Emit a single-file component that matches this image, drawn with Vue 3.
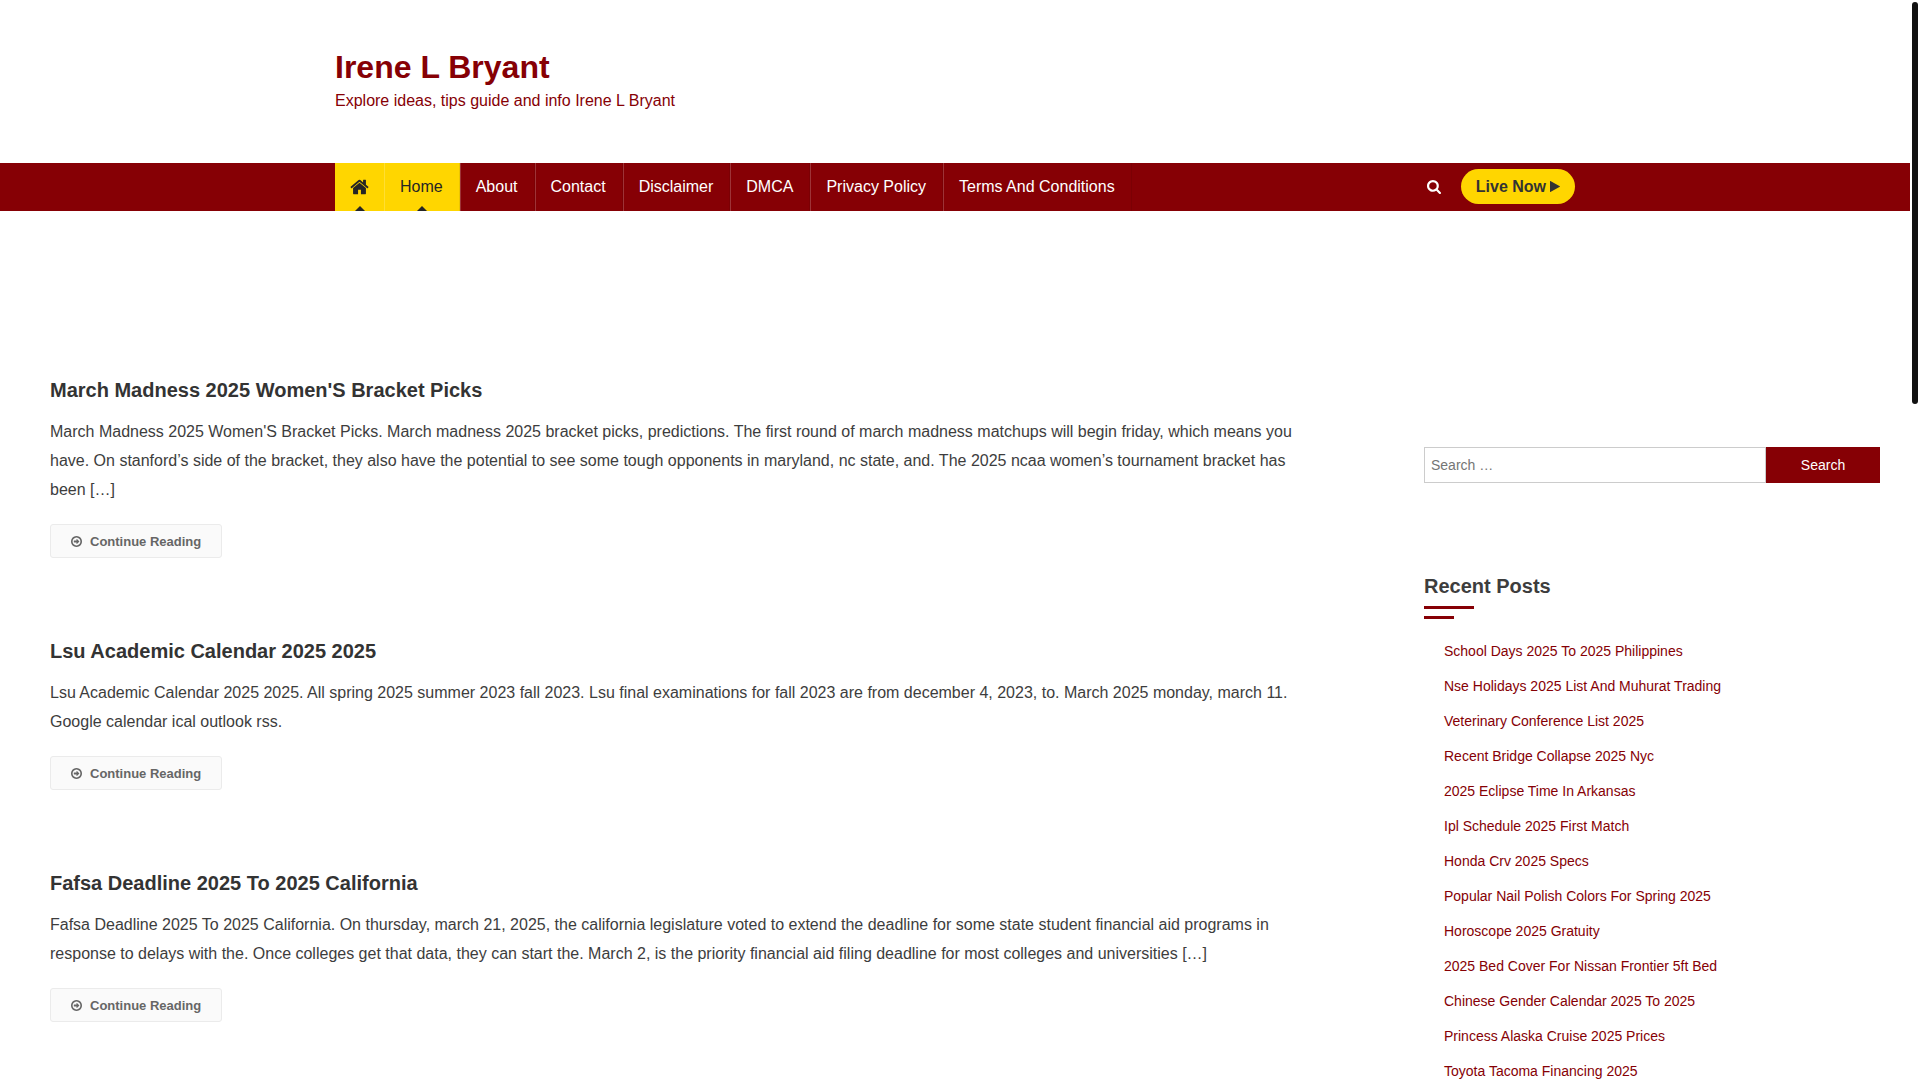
<template>
  <div class="page">
    <header class="site-header">
      <div class="container branding">
        <p class="site-title"><a href="#">Irene L Bryant</a></p>
        <p class="site-description">Explore ideas, tips guide and info Irene L Bryant</p>
      </div>
    </header>

    <nav class="main-nav" aria-label="Primary">
      <div class="container nav-inner">
        <ul class="menu">
          <li class="menu-item home-icon active">
            <a href="#" aria-label="Front page">
              <svg width="19" height="20" viewBox="64 0 1664 1792" aria-hidden="true">
                <path :d="icons.home" />
              </svg>
            </a>
          </li>
          <li
            v-for="item in menu"
            :key="item"
            class="menu-item"
            :class="{ active: item === 'Home' }"
          >
            <a href="#">{{ item }}</a>
          </li>
        </ul>
        <div class="nav-extra">
          <button class="search-toggle" type="button" aria-label="Open search">
            <svg width="14" height="14" viewBox="64 128 1664 1664" aria-hidden="true">
              <path :d="icons.search" />
            </svg>
          </button>
          <a class="live-link" href="#">
            Live Now
            <svg width="10" height="13" viewBox="192 0 1408 1792" aria-hidden="true">
              <path :d="icons.play" />
            </svg>
          </a>
        </div>
      </div>
    </nav>

    <div class="content">
      <main class="posts">
        <article v-for="post in posts" :key="post.title" class="post">
          <h2 class="post-title"><a href="#">{{ post.title }}</a></h2>
          <p class="post-excerpt">{{ post.excerpt }}</p>
          <a class="read-more" href="#">
            <svg width="11" height="11" viewBox="128 128 1536 1536" aria-hidden="true">
              <path :d="icons.arrow" />
            </svg>
            Continue Reading
          </a>
        </article>
      </main>

      <aside class="sidebar">
        <form class="search-form" role="search" @submit.prevent>
          <input v-model="query" type="search" placeholder="Search …" aria-label="Search for" />
          <button type="submit">Search</button>
        </form>
        <section class="widget">
          <h2 class="widget-title">Recent Posts</h2>
          <ul class="recent-list">
            <li v-for="title in recent" :key="title">
              <a href="#">{{ title }}</a>
            </li>
          </ul>
        </section>
      </aside>
    </div>

    <div class="scroll-rail" aria-hidden="true"></div>
  </div>
</template>

<script setup>
import { ref } from 'vue'

const query = ref('')

const menu = ['Home', 'About', 'Contact', 'Disclaimer', 'DMCA', 'Privacy Policy', 'Terms And Conditions']

const posts = [
  {
    title: "March Madness 2025 Women'S Bracket Picks",
    excerpt:
      "March Madness 2025 Women'S Bracket Picks. March madness 2025 bracket picks, predictions. The first round of march madness matchups will begin friday, which means you have. On stanford’s side of the bracket, they also have the potential to see some tough opponents in maryland, nc state, and. The 2025 ncaa women’s tournament bracket has been […]"
  },
  {
    title: 'Lsu Academic Calendar 2025 2025',
    excerpt:
      'Lsu Academic Calendar 2025 2025. All spring 2025 summer 2023 fall 2023. Lsu final examinations for fall 2023 are from december 4, 2023, to. March 2025 monday, march 11. Google calendar ical outlook rss.'
  },
  {
    title: 'Fafsa Deadline 2025 To 2025 California',
    excerpt:
      'Fafsa Deadline 2025 To 2025 California. On thursday, march 21, 2025, the california legislature voted to extend the deadline for some state student financial aid programs in response to delays with the. Once colleges get that data, they can start the. March 2, is the priority financial aid filing deadline for most colleges and universities […]'
  }
]

const recent = [
  'School Days 2025 To 2025 Philippines',
  'Nse Holidays 2025 List And Muhurat Trading',
  'Veterinary Conference List 2025',
  'Recent Bridge Collapse 2025 Nyc',
  '2025 Eclipse Time In Arkansas',
  'Ipl Schedule 2025 First Match',
  'Honda Crv 2025 Specs',
  'Popular Nail Polish Colors For Spring 2025',
  'Horoscope 2025 Gratuity',
  '2025 Bed Cover For Nissan Frontier 5ft Bed',
  'Chinese Gender Calendar 2025 To 2025',
  'Princess Alaska Cruise 2025 Prices',
  'Toyota Tacoma Financing 2025'
]

const icons = {
  home: 'M1472 992v480q0 26-19 45t-45 19h-384v-384h-256v384h-384q-26 0-45-19t-19-45v-480q0-1 .5-3t.5-3l575-474 575 474q1 2 1 6zm223-69l-62 74q-8 9-21 11h-3q-13 0-21-7l-692-577-692 577q-12 8-24 7-13-2-21-11l-62-74q-8-10-7-23.5t11-21.5l719-599q32-26 76-26t76 26l244 204v-195q0-14 9-23t23-9h192q14 0 23 9t9 23v408l219 182q10 8 11 21.5t-7 23.5z',
  search: 'M1216 832q0-185-131.5-316.5t-316.5-131.5-316.5 131.5-131.5 316.5 131.5 316.5 316.5 131.5 316.5-131.5 131.5-316.5zm512 832q0 52-38 90t-90 38q-54 0-90-38l-343-342q-179 124-399 124-143 0-273.5-55.5t-225-150-150-225-55.5-273.5 55.5-273.5 150-225 225-150 273.5-55.5 273.5 55.5 225 150 150 225 55.5 273.5q0 220-124 399l343 343q37 37 37 90z',
  play: 'M1576 927l-1328 738q-23 13-39.5 3t-16.5-36v-1472q0-26 16.5-36t39.5 3l1328 738q23 13 23 31t-23 31z',
  arrow: 'M1285 896q0 14-9 23l-320 320q-9 9-23 9-13 0-22.5-9.5t-9.5-22.5v-192h-352q-13 0-22.5-9.5t-9.5-22.5v-192q0-13 9.5-22.5t22.5-9.5h352v-192q0-14 9-23t23-9q12 0 24 10l319 319q9 9 9 23zM1440 896q0-148-73-273t-198-198-273-73-273 73-198 198-73 273 73 273 198 198 273 73 273-73 198-198 73-273zM1664 896q0 209-103 385.5t-279.5 279.5-385.5 103-385.5-103-279.5-279.5-103-385.5 103-385.5 279.5-279.5 385.5-103 385.5 103 279.5 279.5 103 385.5z'
}
</script>

<style>
body {
  margin: 0;
  overflow: hidden;
  background: #fff;
}
</style>

<style scoped>
.page {
  padding-right: 10px;
  font-family: 'Liberation Sans', Arial, sans-serif;
  font-size: 16px;
  color: #3d3d3d;
}

p,
h2,
ul {
  margin: 0;
  padding: 0;
}

ul {
  list-style: none;
}

a {
  color: inherit;
  text-decoration: none;
}

svg {
  display: block;
  fill: currentColor;
}

.container {
  max-width: 1240px;
  margin: 0 auto;
}

.branding {
  padding: 46px 0 50px;
  color: #860005;
}

.site-title {
  font-size: 32px;
  line-height: 42px;
  font-weight: 700;
}

.site-description {
  line-height: 25px;
}

.main-nav {
  background: #860005;
}

.nav-inner {
  display: flex;
  justify-content: space-between;
}

.menu {
  display: flex;
}

.menu-item {
  position: relative;
  border-left: 1px solid rgba(255, 255, 255, 0.2);
  border-right: 1px solid rgba(0, 0, 0, 0.08);
}

.menu-item a {
  display: flex;
  align-items: center;
  height: 48px;
  padding: 0 16px 0 15px;
  color: #fff;
}

.menu-item.active {
  background: #ffd600;
}

.menu-item.active a {
  color: #252525;
}

.menu-item.active::after {
  content: '';
  position: absolute;
  bottom: 0;
  left: 50%;
  margin-left: -5px;
  border: 5px solid transparent;
  border-top-width: 0;
  border-bottom-color: #252525;
}

.menu-item.home-icon {
  border: 0;
}

.menu-item.home-icon a {
  padding: 0 15px;
}

.nav-extra {
  display: flex;
  align-items: center;
  gap: 20px;
}

.search-toggle {
  padding: 0;
  border: 0;
  background: none;
  color: #fff;
}

.live-link {
  display: flex;
  align-items: center;
  gap: 4px;
  height: 35px;
  margin-bottom: 1px;
  padding: 0 15px;
  border-radius: 18px;
  background: #ffd600;
  color: #333;
  font-weight: 700;
}

.content {
  display: grid;
  grid-template-columns: minmax(0, 1fr) 456px;
  gap: 120px;
  padding: 164px 30px 0 50px;
}

.post {
  padding-bottom: 78px;
}

.post-title {
  font-size: 20px;
  line-height: 30px;
  color: #333;
}

.post-excerpt {
  padding: 12px 0 20px;
  line-height: 29px;
}

.read-more {
  display: inline-flex;
  align-items: center;
  gap: 8px;
  height: 32px;
  padding: 0 20px;
  border: 1px solid #ebebeb;
  border-radius: 3px;
  background: #fafafa;
  color: #666;
  font-size: 13px;
  font-weight: 700;
  vertical-align: top;
}

.sidebar {
  padding-top: 72px;
  font-size: 14px;
}

.search-form {
  display: flex;
  height: 36px;
}

.search-form input {
  width: 75%;
  box-sizing: border-box;
  padding: 0 6px;
  border: 1px solid #ccc;
  border-radius: 0;
  font: inherit;
  color: #666;
  appearance: none;
}

.search-form input::placeholder {
  color: #757575;
}

.search-form button {
  width: 25%;
  padding: 0;
  border: 0;
  background: #860005;
  color: #fff;
  font: inherit;
}

.widget {
  padding-top: 88px;
}

.widget-title {
  position: relative;
  padding-bottom: 18px;
  font-size: 20px;
  line-height: 30px;
}

.widget-title::before,
.widget-title::after {
  content: '';
  position: absolute;
  left: 0;
  height: 3px;
  background: #860005;
}

.widget-title::before {
  bottom: 10px;
  width: 50px;
}

.widget-title::after {
  bottom: 0;
  width: 30px;
}

.recent-list {
  padding-top: 15px;
  color: #860005;
}

.recent-list li {
  padding-left: 20px;
  line-height: 35px;
}

.scroll-rail {
  position: fixed;
  top: 2px;
  right: 2px;
  width: 6px;
  height: 402px;
  border-radius: 5px;
  background: #111;
}
</style>
